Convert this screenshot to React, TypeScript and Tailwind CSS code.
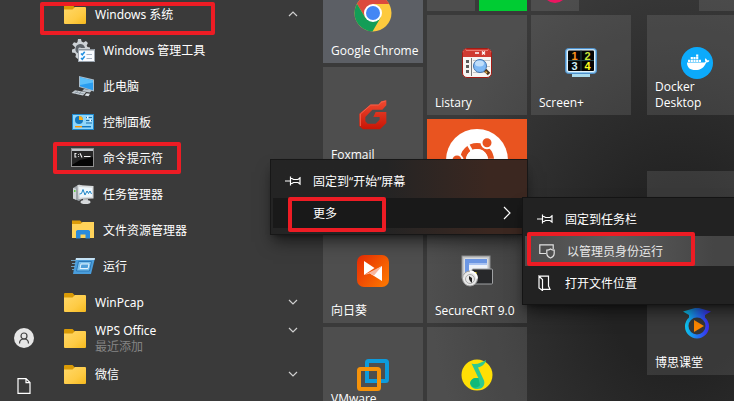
import type { ReactNode } from "react";

/* ---------- application list icons ---------- */

function FolderIcon() {
  return (
    <svg width="22" height="19" viewBox="0 0 22 19">
      <defs>
        <linearGradient id="folderFace" x1="0" y1="0" x2="1" y2="1">
          <stop offset="0" stopColor="#ffd869" />
          <stop offset="0.6" stopColor="#fecb45" />
          <stop offset="1" stopColor="#f5b91d" />
        </linearGradient>
      </defs>
      <path d="M0 1a1 1 0 0 1 1-1h7.500l2.500 2.500V7H0z" fill="#d99a06" />
      <path d="M0 4.500h8.500L11 2h10a1 1 0 0 1 1 1v15a1 1 0 0 1-1 1H1a1 1 0 0 1-1-1z" fill="url(#folderFace)" />
    </svg>
  );
}

function AdminToolsIcon() {
  return (
    <svg width="24" height="24" viewBox="0 0 24 24">
      <path
        d="M7 1h3l.6 2.600 1.900.8 2.400-1.500 2 2.200-1.200 2.400.8 1.500 2.500.6v9H8.500L7 21l-2.600-2 .6-2.600-1-1.500-3-.4v-3l2.500-.7.600-1.600L1.300 6.500l1.700-2.300 2.500.8L6.500 4z"
        fill="#cdd2d6"
      />
      <path d="M9 6a5 5 0 0 0-1.500 9.600V12a1.700 1.700 0 0 1 2.600-2.100H14A5 5 0 0 0 9 6z" fill="#5c6268" />
      <rect x="7.500" y="11.500" width="16" height="12" fill="#f8fbff" stroke="#9aa3ad" />
      <path d="M8 11h15v1.500H8z" fill="#8e979f" />
      <path d="M10 15.500l1.300 1.300 2.400-3M10 20l1.300 1.300 2.400-3" fill="none" stroke="#1f8fe0" strokeWidth="1.500" />
      <path d="M15.500 16.500H21M15.500 20.500H21" stroke="#a5b4c4" />
    </svg>
  );
}

function ThisPcIcon() {
  return (
    <svg width="24" height="24" viewBox="0 0 24 24">
      <path d="M8 2l15 3.500v12L8 13z" fill="#a8bccb" />
      <path d="M9 3.300l13 3.100v9.800L9 12.300z" fill="#2a9df0" />
      <path d="M9 3.300l13 3.100v2L9 11z" fill="#5cc0fb" />
      <path d="M13 15l8 1.200-2 2.300-8-1.300z" fill="#b9c2c9" />
      <path d="M4 16.200l11 2-3 3.300L0.500 19z" fill="#c9d1d7" />
      <path d="M3.500 18l9.500 1.900M7 16.800l-3 3M10.500 17.400l-3 3.200" stroke="#7f8b95" strokeWidth="0.700" />
      <path d="M15.500 19.300l3.500.5-1.500 2.400-3.800-.8z" fill="#dbe1e5" />
    </svg>
  );
}

function ControlPanelIcon() {
  return (
    <svg width="24" height="24" viewBox="0 0 24 24">
      <rect x="1.500" y="4.500" width="21" height="15" fill="#8fd6fb" stroke="#1e88cc" />
      <circle cx="8" cy="10" r="4" fill="#1477bd" />
      <path d="M8 10V6a4 4 0 0 1 4 4z" fill="#ffb21a" />
      <path d="M15 7.500h6M15 10.500h6M15 13h6" stroke="#1d6fa8" />
      <path d="M16 6.500h1.500v2H16zM18.500 9.500H20v2h-1.500z" fill="#fff" />
      <path d="M4 16.700h7" stroke="#ff9700" strokeWidth="1.400" />
      <path d="M11 16.700h9" stroke="#1477bd" strokeWidth="1.400" />
    </svg>
  );
}

function CommandPromptIcon() {
  return (
    <svg width="24" height="24" viewBox="0 0 24 24">
      <rect x="0.500" y="2.500" width="22" height="18" fill="#050505" stroke="#8f8f8f" />
      <path d="M1 3h21v2H1z" fill="#c2c6ca" />
      <path d="M1 5h21v6L9 14l-8 5z" fill="#262626" />
      <path d="M5.500 7.500H4v3.500h1.500M7.500 8v.8M7.500 10.200v.8M9 7.200l2 4.300M13 10.500h6.500" fill="none" stroke="#f3f3f3" strokeWidth="1.100" />
    </svg>
  );
}

function TaskManagerIcon() {
  return (
    <svg width="24" height="24" viewBox="0 0 24 24">
      <path d="M2 6l6-3.500 3 1V17l-3 2-6-2.500z" fill="#9da3a8" />
      <path d="M2 6l3 .8v11L2 16.500z" fill="#d0d4d7" />
      <path d="M3 8h1.500v2H3z" fill="#62d04a" />
      <path d="M6.500 3L22.500 4v12.500L7.500 17z" fill="#d9dcde" />
      <path d="M8 5l13 .8v9L9 15.500z" fill="#eef7fc" />
      <path d="M8.500 12l2-.5 1.500-4 2 5.500 2-4 1.500 2.500 1.500-2.500 1.500 3" fill="none" stroke="#1c83c6" />
      <path d="M12 17h5v2.500h-5z" fill="#b3b7ba" />
      <ellipse cx="14.500" cy="20" rx="5" ry="2" fill="#d6d9db" />
    </svg>
  );
}

function ExplorerIcon() {
  return (
    <svg width="24" height="24" viewBox="0 0 24 24">
      <path d="M1 2.500h8l2 2v4H1z" fill="#dc9c0a" />
      <path d="M1 6h8.500l2-2H23v16H1z" fill="#ffd35a" />
      <path d="M5 20.500V13l1.500-1h11l1.500 1v7.500h-4.500v-4h-5v4z" fill="#2b8bdc" />
    </svg>
  );
}

function RunIcon() {
  return (
    <svg width="24" height="24" viewBox="0 0 24 24">
      <path d="M5 4h19l-4 16H2z" fill="#4a9ddb" />
      <path d="M5 4h19l-.5 2H4.600z" fill="#c4e2f5" />
      <path d="M7.500 7.500h13l-2 9.500H5.500z" fill="#7bc1ee" stroke="#2a78b8" />
      <path d="M10 10h8l-1 4.500H9z" fill="#4f9fda" stroke="#e4f4fd" />
      <path d="M0 6.500h5M1 9.500h3.500M0 12.500h4M1 15.500h2" stroke="#77b6e0" strokeWidth="0.800" />
    </svg>
  );
}

/* ---------- tile icons ---------- */

function ChromeIcon() {
  return (
    <svg width="38" height="38" viewBox="0 0 38 38">
      <circle cx="19" cy="19" r="18.500" fill="#fdca3e" />
      <path d="M19 10h16.100A18.500 18.500 0 0 0 3 9.800L11.200 23.500z" fill="#dc4a3d" />
      <path d="M3 9.800A18.500 18.500 0 0 0 18.500 37.500l8.300-14.200L19 27.500l-7.800-4z" fill="#139d57" />
      <circle cx="19" cy="19" r="9" fill="#fff" />
      <circle cx="19" cy="19" r="7" fill="#4387f4" />
    </svg>
  );
}

function FoxmailIcon() {
  return (
    <svg width="28" height="30" viewBox="146 299 84 90">
      <defs>
        <linearGradient id="foxmail" x1="0" y1="0" x2="0" y2="1">
          <stop offset="0" stopColor="#f04a31" />
          <stop offset="1" stopColor="#c81505" />
        </linearGradient>
      </defs>
      <path
        d="M228 300v15l-12 13h-30l-21 22v13l7 7h24l12-12v-8h-19l7-15h32v33l-19 19h-51l-11-9v-38l33-27h25l8-10z"
        fill="url(#foxmail)"
      />
      <path d="M226 302l-14 4-7 8h-24l-31 27v36" fill="none" stroke="#f4614b" strokeWidth="3" />
    </svg>
  );
}

function ListaryIcon() {
  return (
    <svg width="32" height="32" viewBox="0 0 32 32">
      <rect x="1.500" y="1.500" width="29" height="29" rx="4.500" fill="#f7f5f3" stroke="#a31c15" />
      <path d="M2 10V6a4 4 0 0 1 4-4h20a4 4 0 0 1 4 4v4z" fill="#cf3a31" />
      <path d="M5 3.500h22" stroke="#ea7a70" />
      <path d="M14 6h4M21 4.500l3 3M24 4.500l-3 3" stroke="#fff" strokeWidth="1.300" />
      <path d="M5 13h3v3H5zM5 18h3v3H5zM5 23h3v3H5z" fill="#5b5b5b" />
      <path d="M10.500 11v18" stroke="#777" />
      <path d="M12 13.500h17M12 19.500h17M12 25.500h13" stroke="#c4c4c4" />
      <path d="M24 23l4 4" stroke="#4d351d" strokeWidth="3.500" />
      <path d="M24.500 24.500l1.500 1.500" stroke="#e8b04a" strokeWidth="1.500" />
      <circle cx="19" cy="19" r="6.500" fill="#7fb9f5" stroke="#4273ad" />
      <ellipse cx="18.500" cy="16.500" rx="4.500" ry="3" fill="#c0defa" />
    </svg>
  );
}

function UbuntuIcon() {
  return (
    <svg width="62" height="62" viewBox="0 0 62 62">
      <circle cx="31" cy="31" r="31" fill="#fff" />
      <circle cx="31" cy="31" r="14" fill="none" stroke="#e95420" strokeWidth="6" />
      <path d="M31 31L20 12M31 31h22M31 31L20 50" stroke="#fff" strokeWidth="2.500" />
      <circle cx="31" cy="31" r="11" fill="#fff" />
      <g fill="#e95420" stroke="#fff" strokeWidth="2">
        <circle cx="11" cy="31" r="5.500" />
        <circle cx="41" cy="13.700" r="5.500" />
        <circle cx="41" cy="48.300" r="5.500" />
      </g>
    </svg>
  );
}

function ScreenPlusIcon() {
  return (
    <svg width="32" height="32" viewBox="0 0 32 32">
      <rect x="0.500" y="1.500" width="31" height="25" rx="3" fill="#8ec6ec" stroke="#4d8fcb" />
      <rect x="2" y="2.500" width="28" height="22.500" rx="2" fill="#e7f3fb" />
      <rect x="3" y="3.500" width="26" height="20.500" rx="1" fill="#050505" />
      <path d="M16 3.500V24M3 13.500h26" stroke="#23464f" />
      <path d="M7 27h18v3H7z" fill="#a9dbee" />
      <g fontFamily="Liberation Sans, Arial, sans-serif" fontSize="11" fontWeight="700" textAnchor="middle">
        <text x="9.500" y="12.500" fill="#ff931e">1</text>
        <text x="22.500" y="12.500" fill="#c9e63b">2</text>
        <text x="9.500" y="23" fill="#cdeef5">3</text>
        <text x="22.500" y="23" fill="#ffff1f">4</text>
      </g>
    </svg>
  );
}

function DockerIcon() {
  return (
    <svg width="32" height="32" viewBox="0 0 32 32">
      <circle cx="16" cy="16" r="16" fill="#0caafb" />
      <path
        d="M6 15.500h16.500c1.200 0 1.700-.3 2.100-.8-.8-1-.8-2.400-.1-3.500.9.600 1.400 1.200 1.600 2.200.8-.2 1.600-.1 2.300.4-.6 1.200-1.700 1.700-3.200 1.600C23.300 20.500 19.500 23 14.500 23 9 23 6 20.500 6 15.500z"
        fill="#fff"
      />
      <g fill="#fff">
        <path d="M7 12.700h2.200v2.200H7zM9.700 12.700h2.200v2.200H9.700zM12.400 12.700h2.200v2.200h-2.200zM15.100 12.700h2.200v2.200h-2.200zM17.800 12.700H20v2.200h-2.200z" />
        <path d="M9.700 10.100h2.200v2.200H9.700zM12.400 10.100h2.200v2.200h-2.200zM15.100 10.100h2.200v2.200h-2.200zM15.100 7.600h2.200v2.100h-2.200z" />
      </g>
    </svg>
  );
}

function SunloginIcon() {
  return (
    <svg width="32" height="32" viewBox="0 0 32 32">
      <defs>
        <linearGradient id="sunlogin" x1="0" y1="0" x2="1" y2="0.700">
          <stop offset="0" stopColor="#e62a05" />
          <stop offset="1" stopColor="#fb7200" />
        </linearGradient>
      </defs>
      <rect width="32" height="32" rx="7" fill="url(#sunlogin)" />
      <path d="M25 11v15l-12-7.500z" fill="#fff" />
      <path d="M7 20l18-9-8 9.500-4-2z" fill="#f9b8a0" />
      <path d="M7 6l10.500 7L7 20z" fill="#fff" />
    </svg>
  );
}

function SecureCrtIcon() {
  return (
    <svg width="32" height="32" viewBox="0 0 32 32">
      <rect x="1" y="1" width="28" height="22" fill="#c5c7c9" stroke="#8d8f91" />
      <path d="M3.500 3.500h23v16h-23z" fill="#eef2f8" />
      <path d="M4 4h22v4H8v10H4z" fill="#6c97e4" />
      <path d="M8 8h18v2H8z" fill="#a9c3f2" />
      <rect x="11" y="14" width="20.500" height="15" rx="1" fill="#27282a" stroke="#9fa1a3" />
      <path d="M14 17h1.500v2H14z" fill="#e8cf1c" />
      <circle cx="9" cy="23.500" r="7.500" fill="#e9e9e9" stroke="#9b9b9b" />
      <path d="M9 16.500a7 7 0 0 1 7 7" fill="none" stroke="#fff" strokeWidth="2" />
      <circle cx="9" cy="24" r="4.500" fill="none" stroke="#aaa" />
      <path d="M8 21l3 2v5l-2-2-1-2z" fill="#252525" />
    </svg>
  );
}

function VmwareIcon() {
  return (
    <svg width="32" height="32" viewBox="0 0 32 32">
      <rect x="10" y="2" width="20" height="20" rx="1.500" fill="none" stroke="#0d9bdc" strokeWidth="4" />
      <rect x="2" y="10" width="20" height="20" rx="1.500" fill="none" stroke="#f5920a" strokeWidth="4" />
      <path d="M10 17v5h10" fill="none" stroke="#0d9bdc" strokeWidth="4" />
    </svg>
  );
}

function QqMusicIcon() {
  return (
    <svg width="32" height="32" viewBox="0 0 32 32">
      <circle cx="16" cy="16" r="15.500" fill="#ffdf05" />
      <path d="M10.500 4.500c5 1.500 9.500-.5 14.500-3.500-.5 3.500-3 6-8 7.500l6 13c1.500 5-2 8.500-6.500 8.500-4 0-7.300-2-7.300-5.500 0-4.300 4.300-6.300 8.300-5.300z" fill="#2fc98f" />
      <path d="M9.200 24.500c0-4.300 4.300-6.300 8.300-5.300l1.500 7c-3 3.500-8 3.500-9.800-1.700z" fill="#0fba79" />
    </svg>
  );
}

function BosiIcon() {
  return (
    <svg width="32" height="32" viewBox="0 0 32 32">
      <defs>
        <linearGradient id="bosi" x1="0" y1="0" x2="1" y2="0">
          <stop offset="0.100" stopColor="#0cc3ec" />
          <stop offset="0.500" stopColor="#2277f0" />
          <stop offset="0.900" stopColor="#3a2ff0" />
        </linearGradient>
      </defs>
      <path d="M2 4.500L14 1h4l12 3.500-6 3.500v2.500a12 12 0 1 1-16 0V8z" fill="url(#bosi)" />
      <circle cx="16" cy="19" r="8.500" fill="#363636" />
      <path d="M13 13l10 6-10 6z" fill="#fb8500" />
    </svg>
  );
}

/* ---------- menu glyphs ---------- */

function PinIcon() {
  return (
    <svg width="16" height="16" viewBox="0 0 16 16" fill="none" stroke="#fff" strokeWidth="1.200">
      <path d="M0 8h5.500M5.500 3.500v9M5.500 5.500h1.500l1.500 1h4.500l2-1.500v6l-2-1.500H8.500l-1.500 1H5.500M15 4v8" />
    </svg>
  );
}

function ShieldRunIcon() {
  return (
    <svg width="16" height="16" viewBox="0 0 16 16" fill="none" stroke="#e0e0e0" strokeWidth="1.200">
      <path d="M7 10.500H.8V1.800h13.400V6" />
      <path d="M11.500 6c-1 .8-2.200 1.200-3.700 1.200v3.100c0 2.200 1.500 3.800 3.700 4.700 2.200-.9 3.700-2.500 3.700-4.700V7.200c-1.400 0-2.600-.4-3.700-1.200z" />
    </svg>
  );
}

function OpenLocationIcon() {
  return (
    <svg width="16" height="16" viewBox="0 0 16 16" fill="none" stroke="#fff" strokeWidth="1.200">
      <path d="M2 1.200h9.500V11l1.500 3.300H6M2 1.200l3.500 3.300v11L2 13z" />
    </svg>
  );
}

function Chevron({ up = false }: { up?: boolean }) {
  return (
    <svg width="12" height="8" viewBox="0 0 12 8" fill="none" stroke="#cfcfcf" strokeWidth="1.200">
      <path d={up ? "M2 6l4-4 4 4" : "M2 2l4 4 4-4"} />
    </svg>
  );
}

/* ---------- building blocks ---------- */

function FolderRow({ label, note, open = false, marked = false }: { label: string; note?: string; open?: boolean; marked?: boolean }) {
  return (
    <li className="relative">
      <button type="button" aria-expanded={open} className="flex h-9 w-full items-center text-left">
        <FolderIcon />
        <span className="ml-[9px] flex-1 pt-0.5 leading-4">
          {label}
          {note && <span className="block text-[#848484]">{note}</span>}
        </span>
        <span className={note ? "mb-4" : ""}>
          <Chevron up={open} />
        </span>
      </button>
      {marked && <span className="pointer-events-none absolute -left-6 top-1.5 h-[33px] w-[175px] rounded-xs border-4 border-[#ed1c24]" />}
    </li>
  );
}

function AppRow({ label, icon, marked = false }: { label: string; icon: ReactNode; marked?: boolean }) {
  return (
    <li className="relative">
      <button type="button" className="flex h-9 w-full items-center gap-2 pl-[7px] text-left">
        {icon}
        <span className="pt-0.5">{label}</span>
      </button>
      {marked && <span className="pointer-events-none absolute -left-[11px] top-0.5 h-8 w-32 rounded-xs border-4 border-[#ed1c24]" />}
    </li>
  );
}

function Tile({ label, icon, place, color = "bg-white/10" }: { label?: string; icon?: ReactNode; place: string; color?: string }) {
  return (
    <button type="button" className={`relative col-span-2 row-span-2 text-left ${color} ${place}`}>
      <span className="flex h-full items-center justify-center pb-1">{icon}</span>
      {label && <span className="absolute bottom-1 left-2 right-1 leading-4">{label}</span>}
    </button>
  );
}

function MenuItem({ label, icon, children, active = "" }: { label: string; icon?: ReactNode; children?: ReactNode; active?: string }) {
  return (
    <button type="button" role="menuitem" className={`relative flex h-[30px] w-full items-center px-3 text-left ${active}`}>
      <span className="mr-3 w-4">{icon}</span>
      <span className="flex-1 pt-0.5">{label}</span>
      {children}
    </button>
  );
}

const tileGrid = "grid auto-rows-[48px] gap-1";

export default function App() {
  return (
    <main className="relative flex h-screen overflow-hidden bg-[#3a3a3a] bg-[radial-gradient(ellipse_250px_320px_at_680px_280px,#232323_30%,#3a3a3a)] font-['Open_Sans','Noto_Sans_CJK_SC',sans-serif] text-xs text-white">
      <aside className="-mb-[9px] flex w-12 shrink-0 flex-col justify-end">
        <button type="button" aria-label="用户" className="flex h-12 items-center justify-center">
          <svg width="20" height="20" viewBox="0 0 20 20">
            <circle cx="10" cy="10" r="10" fill="#e6e6e6" />
            <circle cx="10" cy="8" r="3" fill="none" stroke="#444" strokeWidth="1.200" />
            <path d="M5.500 15.500c0-3 2-4.500 4.500-4.500s4.500 1.500 4.500 4.500" fill="none" stroke="#444" strokeWidth="1.200" />
          </svg>
        </button>
        <button type="button" aria-label="文档" className="flex h-12 items-center justify-center">
          <svg width="14" height="16" viewBox="0 0 14 16" fill="none" stroke="#fff" strokeWidth="1.200">
            <path d="M1 .6h8l4 4v10.800H1zM9 .6v4h4" />
          </svg>
        </button>
      </aside>

      <nav aria-label="应用" className="w-[275px] shrink-0 pl-4 pr-6 font-['Noto_Sans','Noto_Sans_CJK_SC',sans-serif]">
        <ul className="-mt-1">
          <FolderRow label="Windows 系统" open marked />
          <AppRow label="Windows 管理工具" icon={<AdminToolsIcon />} />
          <AppRow label="此电脑" icon={<ThisPcIcon />} />
          <AppRow label="控制面板" icon={<ControlPanelIcon />} />
          <AppRow label="命令提示符" icon={<CommandPromptIcon />} marked />
          <AppRow label="任务管理器" icon={<TaskManagerIcon />} />
          <AppRow label="文件资源管理器" icon={<ExplorerIcon />} />
          <AppRow label="运行" icon={<RunIcon />} />
          <FolderRow label="WinPcap" />
          <FolderRow label="WPS Office" note="最近添加" />
          <FolderRow label="微信" />
        </ul>
      </nav>

      <section aria-label="磁贴" className="-mt-[37px] flex shrink-0 items-start gap-4">
        <div className={`${tileGrid} grid-cols-[repeat(6,48px)]`}>
          <Tile label="Google Chrome" icon={<ChromeIcon />} color="bg-[#5c5f65]" place="col-start-1 row-start-1 [&>span:first-child]:pb-0" />
          <div className="col-start-3 row-start-1 bg-white/10" />
          <div className="col-start-4 row-start-1 bg-[#00cc33]" />
          <div className="col-start-5 row-start-1 flex items-end justify-center bg-white/10 pb-2">
            <svg width="24" height="24" viewBox="0 0 24 24">
              <circle cx="12" cy="12" r="12" fill="#ec1561" />
              <circle cx="12" cy="11" r="9" fill="#fb3b3b" />
            </svg>
          </div>
          <Tile label="Foxmail" icon={<FoxmailIcon />} place="col-start-1 row-start-3" />
          <Tile label="Listary" icon={<ListaryIcon />} place="col-start-3 row-start-2" />
          <Tile label="Screen+" icon={<ScreenPlusIcon />} place="col-start-5 row-start-2" />
          <button type="button" aria-label="Ubuntu" className="col-span-2 col-start-3 row-span-2 row-start-4 flex items-start justify-center bg-[#e95420] pt-2.5">
            <UbuntuIcon />
          </button>
          <Tile label="向日葵" icon={<SunloginIcon />} place="col-start-1 row-start-6" />
          <Tile label="SecureCRT 9.0" icon={<SecureCrtIcon />} place="col-start-3 row-start-6" />
          <Tile label="VMware Workstation" icon={<VmwareIcon />} place="col-start-1 row-start-8" />
          <Tile icon={<QqMusicIcon />} place="col-start-3 row-start-8" />
        </div>
        <div className={`${tileGrid} grid-cols-[repeat(2,48px)]`}>
          <div className="col-start-2 row-start-1 bg-white/10" />
          <Tile label="Docker Desktop" icon={<DockerIcon />} place="col-start-1 row-start-2 [&>span:last-child]:pr-6" />
          <div className="col-span-2 col-start-1 row-span-2 row-start-5 bg-white/10" />
          <Tile label="博思课堂" icon={<BosiIcon />} place="col-start-1 row-start-7" />
        </div>
      </section>

      <div
        role="menu"
        className="absolute left-[270px] top-[159px] flex w-[258px] flex-col gap-0.5 border border-[#171717] bg-linear-to-r from-[#242424] from-45% to-[#3b2720] to-85% px-0.5 py-1.5 shadow-lg shadow-black/50"
      >
        <MenuItem label="固定到“开始”屏幕" icon={<PinIcon />} />
        <MenuItem label="更多" active="bg-[#191919]">
          <svg className="mr-0.5" width="8" height="14" viewBox="0 0 8 14" fill="none" stroke="#fff" strokeWidth="1.200">
            <path d="M1 1l6 6-6 6" />
          </svg>
          <span className="pointer-events-none absolute -top-px left-[15px] h-[35px] w-[98px] rounded-xs border-4 border-[#ed1c24]" />
        </MenuItem>
      </div>

      <div
        role="menu"
        className="absolute left-[522px] top-[197px] flex w-[258px] flex-col gap-0.5 border border-[#141414] bg-[#222222] px-0.5 py-1.5 shadow-lg shadow-black/50"
      >
        <MenuItem label="固定到任务栏" icon={<PinIcon />} />
        <MenuItem
          label="以管理员身份运行"
          icon={<ShieldRunIcon />}
          active="bg-linear-to-r from-[#4b4b4b] via-[#5c5c5c] via-35% to-[#454545] to-75% pl-3.5 text-[#e8e8e8]"
        >
          <span className="pointer-events-none absolute -top-1 left-0.5 h-[34px] w-[168px] rounded-xs border-4 border-[#ed1c24]" />
        </MenuItem>
        <MenuItem label="打开文件位置" icon={<OpenLocationIcon />} />
      </div>
    </main>
  );
}
